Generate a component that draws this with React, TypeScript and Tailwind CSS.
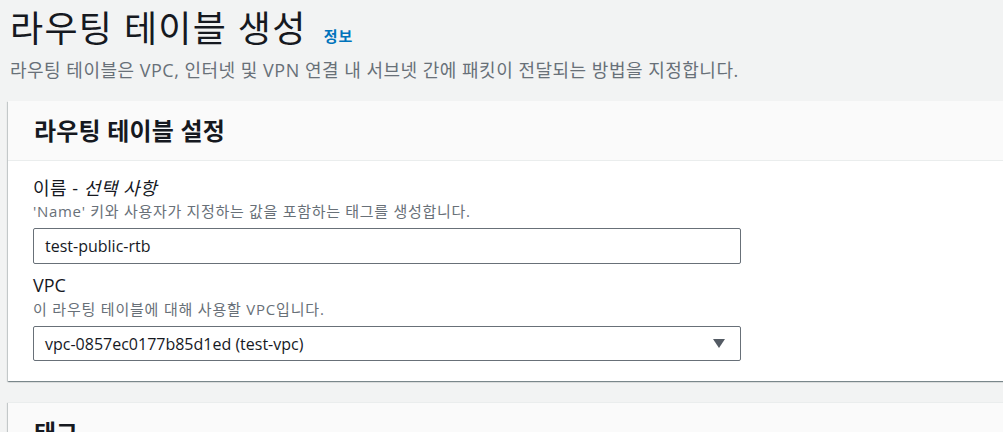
import React from "react";

const font = { fontFamily: '"Open Sans", "Noto Sans CJK KR", sans-serif' };

export default function App() {
  return (
    <div
      className="w-[1003px] h-[432px] overflow-hidden bg-[#f2f3f3] text-[#16191f]"
      style={font}
    >
      <div className="pl-[8px]">
        <div className="flex items-center pl-[2px] pt-[7px] h-[51px]">
          <h1 className="text-[36px] leading-[44px] tracking-[1.3px] font-normal text-[#16191f]">
            라우팅 테이블 생성
          </h1>
          <a className="ml-[17px] mt-[14px] text-[15px] leading-[20px] tracking-[1px] font-bold text-[#0073bb]">
            정보
          </a>
        </div>
        <p className="pl-[2px] mt-[6px] text-[18px] leading-[26px] tracking-[0.5px] text-[#687078]">
          라우팅 테이블은 VPC, 인터넷 및 VPN 연결 내 서브넷 간에 패킷이 전달되는 방법을 지정합니다.
        </p>

        <div className="mt-[18px] w-[1100px] bg-white shadow-[0_1px_1px_0_rgba(0,28,36,0.3),1px_1px_1px_0_rgba(0,28,36,0.15),-1px_1px_1px_0_rgba(0,28,36,0.15)]">
          <div className="h-[60px] bg-[#fafafa] border-b border-[#eaeded] flex items-center pl-[26px]">
            <h2 className="text-[24px] font-bold leading-[30px] tracking-[0.2px]">라우팅 테이블 설정</h2>
          </div>
          <div className="pl-[25px] pt-[14px] pb-[20px]">
            <div className="text-[18px] leading-[26px] tracking-[0.5px]">
              이름 - <i>선택 사항</i>
            </div>
            <div className="text-[15px] leading-[20px] tracking-[0.7px] text-[#687078]">
              'Name' 키와 사용자가 지정하는 값을 포함하는 태그를 생성합니다.
            </div>
            <div className="mt-[7px] w-[708px] h-[36px] border border-[#687078] rounded-[2px] flex items-center pl-[11px] text-[16px]">
              test-public-rtb
            </div>
            <div className="mt-[8px] text-[18px] leading-[26px]">VPC</div>
            <div className="mt-[1px] text-[15px] leading-[20px] tracking-[0.8px] text-[#687078]">
              이 라우팅 테이블에 대해 사용할 VPC입니다.
            </div>
            <div className="mt-[7px] w-[708px] h-[35px] border border-[#687078] rounded-[2px] flex items-center justify-between pl-[11px] pr-[15px] text-[16px]">
              <span>vpc-0857ec0177b85d1ed (test-vpc)</span>
              <svg width="12" height="9" viewBox="0 0 12 9">
                <path d="M0 0 H12 L6 9 Z" fill="#545b64" />
              </svg>
            </div>
          </div>
        </div>

        <div className="mt-[21px] w-[1100px] bg-[#fafafa] shadow-[0_1px_1px_0_rgba(0,28,36,0.3),1px_1px_1px_0_rgba(0,28,36,0.15),-1px_1px_1px_0_rgba(0,28,36,0.15)] h-[100px] border-t border-[#eaeded]">
          <div className="h-[59px] flex items-center pl-[26px]">
            <h2 className="text-[24px] font-bold leading-[30px]">태그</h2>
          </div>
        </div>
      </div>
    </div>
  );
}
